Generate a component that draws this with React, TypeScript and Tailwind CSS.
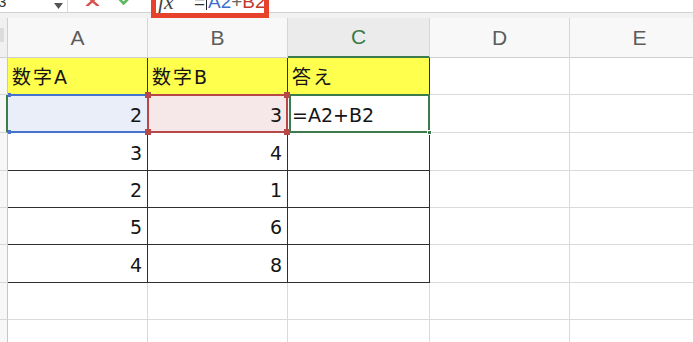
import React from "react";

type Cell = string | number | null;

const colWidths = ["w-[140px]", "w-[140px]", "w-[142px]", "w-[140px]", "w-[140px]"];
const rowHeights = ["h-[37px]", "h-[38px]", "h-[38px]", "h-[37px]", "h-[37px]", "h-[38px]", "h-[37px]", "h-[37px]"];

const rows: Cell[][] = [
    ["数字A", "数字B", "答え"],
    [2, 3, "=A2+B2"],
    [3, 4, null],
    [2, 1, null],
    [5, 6, null],
    [4, 8, null],
    [null, null, null],
    [null, null, null],
];

const ColumnHeader = ({ label, index }: { label: string; index: number }) => {
    const active = index === 2;
    return (
        <div
            className={`${colWidths[index]} h-full shrink-0 flex items-center justify-center border-r border-[#d6d6d6] text-[21px] font-['Liberation_Sans',sans-serif] ${
                active ? "bg-[#ebebeb] text-[#3a7a48] border-b-2 border-b-[#3d7a4c]" : "bg-[#f8f8f8] text-[#5c5c5c] border-b border-b-[#d0d0d0]"
            }`}
        >
            {label}
        </div>
    );
};

const Handle = ({ className }: { className: string }) => <div className={`absolute z-20 ${className}`} />;

const SpreadsheetCell = ({ value, col, row }: { value: Cell; col: number; row: number }) => {
    const inTable = col < 3 && row < 6;
    const header = row === 0 && inTable;
    const isNumber = typeof value === "number";
    const border = inTable ? "border-r border-b border-[#2f2f2f]" : "border-r border-b border-[#dadada]";
    let fill = header ? "bg-[#ffff4d]" : "bg-white";
    if (row === 1 && col === 0) fill = "bg-[#e9eef8]";
    if (row === 1 && col === 1) fill = "bg-[#f6e8e8]";

    return (
        <div
            className={`${colWidths[col]} h-full shrink-0 relative flex items-center pt-[3px] ${border} ${fill} ${
                isNumber ? "justify-end pr-[5px]" : "justify-start pl-[4px]"
            }`}
        >
            {value !== null && (
                <span className={`text-[19px] text-[#151515] leading-none ${header ? "tracking-[2px]" : ""}`}>{value}</span>
            )}

            {row === 1 && col === 0 && (
                <>
                    <div className="absolute -top-[1px] -bottom-[1px] left-0 -right-[1px] border-y-2 border-[#4673cd] z-10" />
                    <Handle className="-top-[2px] left-0 w-[3px] h-[4px] bg-[#4673cd]" />
                    <Handle className="-bottom-[2px] left-0 w-[3px] h-[4px] bg-[#4673cd]" />
                </>
            )}
            {row === 1 && col === 1 && (
                <>
                    <div className="absolute -top-[1px] -bottom-[1px] -left-[1px] -right-[1px] border-2 border-[#b84747] z-10" />
                    <Handle className="-top-[3px] -left-[3px] w-[6px] h-[6px] bg-[#b84747]" />
                    <Handle className="-bottom-[3px] -left-[3px] w-[6px] h-[6px] bg-[#b84747]" />
                    <Handle className="-top-[3px] -right-[3px] w-[6px] h-[6px] bg-[#b84747]" />
                    <Handle className="-bottom-[3px] -right-[3px] w-[6px] h-[6px] bg-[#b84747]" />
                </>
            )}
            {row === 1 && col === 2 && (
                <>
                    <div className="absolute -top-[1px] -bottom-[1px] left-[1px] -right-[1px] border-2 border-[#3d7a4c] z-10" />
                    <Handle className="-bottom-[3px] -right-[3px] w-[5px] h-[5px] bg-[#3d7a4c] border border-white" />
                </>
            )}
        </div>
    );
};

const Toolbar = () => (
    <div className="relative h-[13px] flex border-b border-[#d2d2d2] bg-white overflow-hidden shrink-0">
        <div className="w-[68px] shrink-0 relative border-r border-[#d8d8d8] flex">
            <span className="-ml-[12px] -mt-[9px] text-[15px] text-[#333] font-['Liberation_Sans',sans-serif]">B3</span>
            <svg className="absolute left-[54px] top-[3px]" width="9" height="6" viewBox="0 0 9 6">
                <path d="M0 0 L9 0 L4.5 6 Z" fill="#555" />
            </svg>
        </div>
        <svg className="ml-[17px] -mt-[4px]" width="15" height="10" viewBox="0 0 15 10">
            <path d="M2 0 L13 10 M13 0 L2 10" stroke="#d9534f" strokeWidth="2.4" strokeLinecap="round" />
        </svg>
        <svg className="ml-[18px] -mt-[5px]" width="15" height="10" viewBox="0 0 15 10">
            <path d="M1.5 4 L5.5 8.5 L13.5 0.5" stroke="#5cb85c" strokeWidth="2.6" fill="none" strokeLinecap="round" strokeLinejoin="round" />
        </svg>
    </div>
);

const FormulaHighlight = () => (
    <div className="absolute left-[151px] -top-[6px] w-[118px] h-[24px] border-[5px] border-[#e6422c] z-30 overflow-hidden flex items-start bg-white">
        <span className="ml-[2px] -mt-[8px] text-[22px] italic text-[#444] font-['Liberation_Serif',serif] leading-none">fx</span>
        <div className="ml-[10px] w-px h-[11px] bg-[#d0d0d0] self-end mb-[2px]" />
        <div className="ml-[10px] -mt-[7px] flex items-start text-[19px] leading-none font-['Liberation_Sans',sans-serif]">
            <span className="text-[#333]">=</span>
            <span className="w-px h-[18px] bg-[#222] mx-[1px]" />
            <span className="text-[#3d6fd0]">A2</span>
            <span className="text-[#666]">+</span>
            <span className="text-[#c0392b]">B2</span>
        </div>
    </div>
);

export default function App() {
    return (
        <div className="relative w-[693px] h-[342px] overflow-hidden bg-white flex flex-col font-['DejaVu_Sans','Noto_Sans_CJK_JP',sans-serif]">
            <Toolbar />
            <FormulaHighlight />
            <div className="h-[5px] bg-[#f2f2f2] shrink-0" />

            <div className="flex h-[40px] shrink-0">
                <div className="w-[8px] shrink-0 bg-[#f0f0f0] border-r border-b border-[#cfcfcf] relative">
                    <svg className="absolute left-0 top-[10px]" width="4" height="14" viewBox="0 0 4 14">
                        <path d="M0 0 L4 0 L4 14 L0 14 Z" fill="#dcdcdc" />
                    </svg>
                </div>
                {["A", "B", "C", "D", "E"].map((label, i) => (
                    <ColumnHeader key={label} label={label} index={i} />
                ))}
            </div>

            {rows.map((row, r) => (
                <div key={r} className={`flex shrink-0 ${rowHeights[r]}`}>
                    <div
                        className={`w-[8px] shrink-0 bg-[#f7f7f7] border-b border-[#d8d8d8] ${
                            r === 1 ? "border-r-2 border-r-[#3d7a4c]" : "border-r border-r-[#c6c6c6]"
                        }`}
                    />
                    {[...row, null, null].map((value, c) => (
                        <SpreadsheetCell key={c} value={value} col={c} row={r} />
                    ))}
                </div>
            ))}
        </div>
    );
}
